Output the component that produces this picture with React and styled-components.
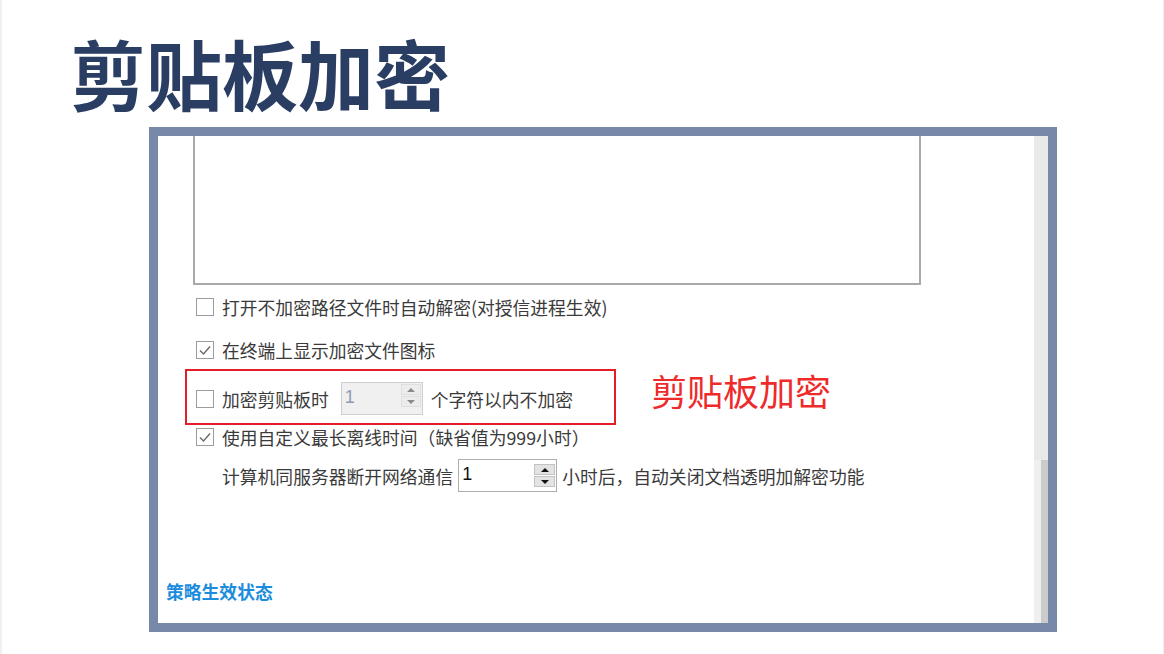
import React from 'react';
import styled, { createGlobalStyle } from 'styled-components';

const GlobalStyle = createGlobalStyle`
    html, body {
        margin: 0;
        padding: 0;
        background: #fff;
    }
    * {
        box-sizing: border-box;
    }
`;

const Page = styled.div`
    width: 1164px;
    height: 654px;
    padding-top: 34px;
    border-left: 2px solid #eef1f4;
    border-right: 1px solid #eeeeee;
    font-family: 'Noto Sans CJK SC', 'Noto Sans', sans-serif;
    overflow: hidden;
`;

const Title = styled.h1`
    margin: 0 0 0 68px;
    font-size: 76px;
    line-height: 1;
    font-weight: 700;
    color: #2a3d63;
    letter-spacing: 0;
`;

const Frame = styled.div`
    display: flex;
    width: 908px;
    height: 505px;
    margin: 17px 0 0 147px;
    border: 9px solid #7888a8;
    background: #fff;
`;

const Content = styled.div`
    flex: 1;
    display: flex;
    flex-direction: column;
    padding: 0 0 21px 8px;
    font-size: 17.8px;
    line-height: 22px;
    color: #3a3a3a;
    overflow: hidden;
`;

const TextBox = styled.div`
    width: 728px;
    height: 149px;
    margin-left: 27px;
    border: 2px solid #a9a9a9;
    border-top: none;
    flex-shrink: 0;
`;

const Options = styled.div`
    display: flex;
    flex-direction: column;
    margin-left: 30px;
`;

const Row = styled.div`
    display: flex;
    align-items: center;
    height: ${p => (p.$tall ? '33px' : '22px')};
    margin-top: ${p => p.$gap}px;
    padding-left: ${p => p.$indent || 0}px;
    white-space: nowrap;
`;

const Box = styled.span`
    width: 18px;
    height: 18px;
    margin-right: 8px;
    border: 1px solid #9c9c9c;
    background: #fff;
    display: flex;
    align-items: center;
    justify-content: center;
    flex-shrink: 0;
`;

const HighlightRow = styled.div`
    display: flex;
    align-items: flex-start;
    margin-top: 8px;
    margin-left: -11px;
`;

const Highlight = styled.div`
    display: flex;
    align-items: center;
    width: 431px;
    height: 56px;
    padding: 3px 0 0 9px;
    border: 2px solid #e41e26;
    white-space: nowrap;
`;

const Note = styled.span`
    margin: 3px 0 0 35px;
    font-size: 36px;
    line-height: 1;
    color: #ee2a2a;
`;

const Spin = styled.div`
    position: relative;
    display: flex;
    width: ${p => p.$width}px;
    height: 33px;
    margin: 0 ${p => p.$after}px 0 ${p => p.$before}px;
    border: 1px solid ${p => (p.$disabled ? '#cfcfcf' : '#adadad')};
    background: ${p => (p.$disabled ? '#f0f0f0' : '#fff')};
    flex-shrink: 0;
`;

const SpinValue = styled.span`
    flex: 1;
    padding: 2px 0 0 3px;
    font-family: 'Liberation Sans', Arial, sans-serif;
    font-size: 18px;
    line-height: 24px;
    color: ${p => (p.$disabled ? '#8f9cb0' : '#111')};
`;

const SpinButtons = styled.div`
    display: flex;
    flex-direction: column;
    gap: 1px;
    margin: ${p => (p.$disabled ? '1px 1px 0 0' : '4px 1px 0 0')};
`;

const SpinBtn = styled.span`
    width: ${p => (p.$disabled ? '20px' : '21px')};
    height: 11px;
    display: flex;
    align-items: center;
    justify-content: center;
    background: ${p => (p.$disabled ? '#ececec' : '#e3e3e3')};
    border: 1px solid ${p => (p.$disabled ? '#dedede' : '#c2c2c2')};

    &::after {
        content: '';
        border-left: 4px solid transparent;
        border-right: 4px solid transparent;
        ${p => (p.$down ? 'border-top' : 'border-bottom')}: 4px solid ${p => (p.$disabled ? '#8a8a8a' : '#111')};
    }
`;

const StatusLink = styled.a`
    margin-top: auto;
    font-weight: 700;
    color: #1c8ddd;
    text-decoration: none;
`;

const Scrollbar = styled.div`
    width: 14px;
    display: flex;
    flex-direction: column;
    flex-shrink: 0;
`;

const Track = styled.div`
    flex: 1;
    background: #e9e9e9;
`;

const Thumb = styled.div`
    height: 163px;
    background: linear-gradient(to right, #efefef 50%, #cbcbcb 50%);
`;

const Checkbox = ({ checked }) => (
    <Box>
        {checked && (
            <svg width="14" height="14" viewBox="0 0 14 14">
                <polyline points="2,7.5 5.5,11 12,3.5" fill="none" stroke="#6a6a6a" strokeWidth="1.4" />
            </svg>
        )}
    </Box>
);

const Spinner = ({ value, disabled, width, before, after }) => (
    <Spin $disabled={disabled} $width={width} $before={before} $after={after}>
        <SpinValue $disabled={disabled}>{value}</SpinValue>
        <SpinButtons $disabled={disabled}>
            <SpinBtn $disabled={disabled} />
            <SpinBtn $disabled={disabled} $down />
        </SpinButtons>
    </Spin>
);

const App = () => {
    return (
        <Page>
            <GlobalStyle />
            <Title>剪贴板加密</Title>
            <Frame>
                <Content>
                    <TextBox />
                    <Options>
                        <Row $gap={11}>
                            <Checkbox />
                            打开不加密路径文件时自动解密(对授信进程生效)
                        </Row>
                        <Row $gap={21}>
                            <Checkbox checked />
                            在终端上显示加密文件图标
                        </Row>
                        <HighlightRow>
                            <Highlight>
                                <Checkbox />
                                加密剪贴板时
                                <Spinner value="1" disabled width={82} before={12} after={8} />
                                个字符以内不加密
                            </Highlight>
                            <Note>剪贴板加密</Note>
                        </HighlightRow>
                        <Row $gap={1}>
                            <Checkbox checked />
                            使用自定义最长离线时间（缺省值为999小时）
                        </Row>
                        <Row $gap={11} $indent={26} $tall>
                            计算机同服务器断开网络通信
                            <Spinner value="1" width={99} before={5} after={5} />
                            小时后，自动关闭文档透明加解密功能
                        </Row>
                    </Options>
                    <StatusLink href="#">策略生效状态</StatusLink>
                </Content>
                <Scrollbar>
                    <Track />
                    <Thumb />
                </Scrollbar>
            </Frame>
        </Page>
    );
};

export default App;
